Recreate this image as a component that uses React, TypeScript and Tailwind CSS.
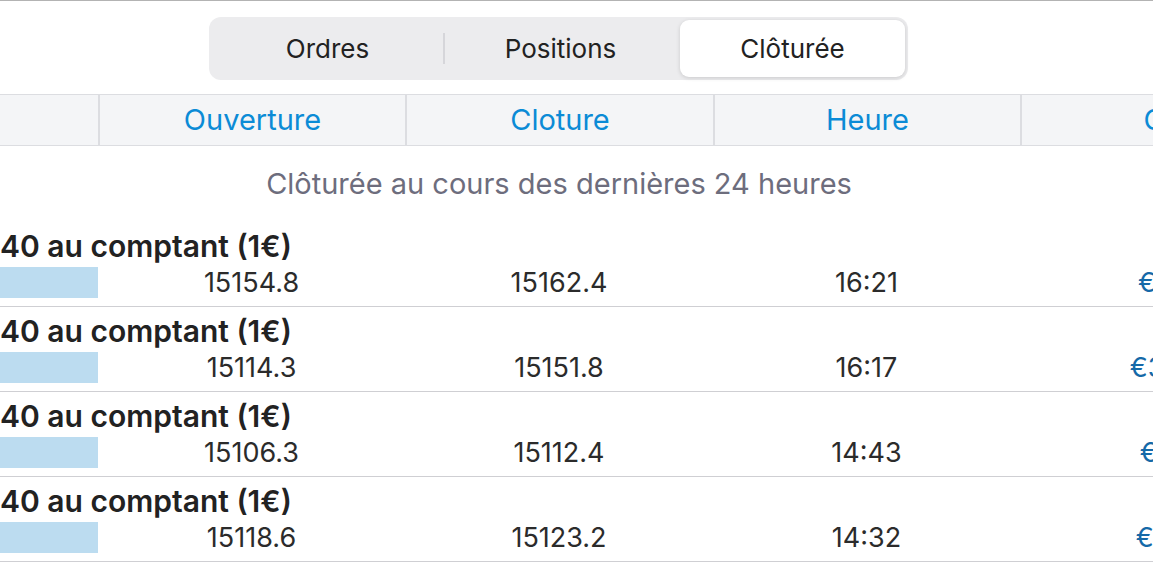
import React from "react";

const cols = ["", "Ouverture", "Cloture", "Heure", "Gain"];

const rows = [
  { open: "15154.8", close: "15162.4", time: "16:21", gain: "€7.60" },
  { open: "15114.3", close: "15151.8", time: "16:17", gain: "€37.50" },
  { open: "15106.3", close: "15112.4", time: "14:43", gain: "€6.10" },
  { open: "15118.6", close: "15123.2", time: "14:32", gain: "€4.60" },
];

const grid = "grid grid-cols-[307px_307px_308px_307px_307px] ml-[-209px] w-max";

export default function App() {
  return (
    <div className="w-full h-[570px] overflow-hidden bg-white border-t border-[#b3b3b3] font-['Inter','Liberation_Sans',sans-serif]">
      {/* tabs */}
      <div className="pt-[16px] pb-[14px]">
        <div className="ml-[209px] w-[699px] h-[63px] rounded-[12px] bg-[#ececee] p-[3px] flex items-stretch">
          <div className="flex-1 flex items-center justify-center text-[26px] text-[#222]">Ordres</div>
          <div className="w-[2px] my-[13px] bg-[#d6d6da]" />
          <div className="flex-1 flex items-center justify-center text-[26px] text-[#222]">Positions</div>
          <div className="w-[225px] ml-[4px] flex items-center justify-center text-[26px] text-[#222] bg-white rounded-[9px] shadow-[0_1px_4px_rgba(0,0,0,0.15)]">
            Clôturée
          </div>
        </div>
      </div>

      {/* header */}
      <div className="h-[52px] bg-[#f4f5f7] border-y border-[#dcdde1] overflow-hidden">
        <div className={grid + " h-full"}>
          {cols.map((c, i) => (
            <div
              key={i}
              className={
                "flex items-center justify-center text-[29px] text-[#0b8bd6] " +
                (i > 0 ? "border-l-2 border-[#dcdde1]" : "")
              }
            >
              {c}
            </div>
          ))}
        </div>
      </div>

      <div className="h-[76px] pr-[35px] flex items-center justify-center text-[29px] text-[#6d6d7d]">
        Clôturée au cours des dernières 24 heures
      </div>

      {rows.map((r, i) => (
        <div key={i} className="h-[85px] border-b border-[#cfcfd3] overflow-hidden">
          <div className="h-[45px] flex items-center text-[30px] font-semibold text-[#222] pt-[3px] whitespace-nowrap">
            40 au comptant (1€)
          </div>
          <div className={grid + " h-[31px] items-center text-[27px] leading-[31px]"}>
            <div className="h-[31px] flex justify-end">
              <div className="w-[98px] h-full bg-[#bcdcf0]" />
            </div>
            <div className="text-center text-[#2b2b2b]">{r.open}</div>
            <div className="text-center text-[#2b2b2b]">{r.close}</div>
            <div className="text-center text-[#2b2b2b]">{r.time}</div>
            <div className="text-center text-[#1569a8]">{r.gain}</div>
          </div>
        </div>
      ))}
    </div>
  );
}
